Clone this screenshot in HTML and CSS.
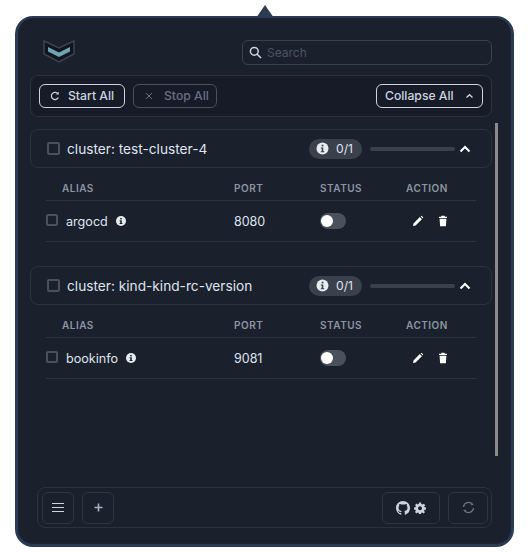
FILE: index.html
```html
<!DOCTYPE html>
<html lang="en">
<head>
<meta charset="utf-8">
<title>Port Forward</title>
<link rel="stylesheet" href="styles.css">
</head>
<body>
<div class="popup">
  <div class="arrow"></div>
  <div class="panel">
    <header class="top">
      <svg class="logo" width="34" height="26" viewBox="0 0 34 26">
        <path d="M2 3 L17 10 L32 3 L32 16 L17 24 L2 16 Z" fill="#10151f" stroke="#3c4350" stroke-width="1.5"/>
        <path d="M6 9 L17 14.5 L28 9 L28 13.5 L17 19 L6 13.5 Z" fill="#6fa3b0"/>
      </svg>
      <label class="search">
        <svg width="13" height="13" viewBox="0 0 13 13"><circle cx="5.3" cy="5.3" r="3.9" fill="none" stroke="#cbd5e0" stroke-width="1.5"/><path d="M8.2 8.2 L12 12" stroke="#cbd5e0" stroke-width="1.6"/></svg>
        <span>Search</span>
      </label>
    </header>
    <div class="toolbar">
      <button class="btn btn-on start"><svg width="10" height="10" viewBox="0 0 10 10"><path d="M8.3 6.4A3.6 3.6 0 1 1 7.6 2.4" fill="none" stroke="#cbd5e0" stroke-width="1.2"/><path d="M8.8 0.8V3.6H6Z" fill="#cbd5e0"/></svg>Start All</button>
      <button class="btn btn-off stop"><svg width="8" height="8" viewBox="0 0 8 8"><path d="M1 1L7 7M7 1L1 7" stroke="#687080" stroke-width="1"/></svg>Stop All</button>
      <button class="btn btn-on collapse">Collapse All<svg width="9" height="6" viewBox="0 0 9 6"><path d="M1.5 4.5L4.5 1.7L7.5 4.5" fill="none" stroke="#cbd5e0" stroke-width="1.3"/></svg></button>
    </div>
    <div class="scroll">
      <div class="list">
        <section class="group">
          <div class="group-head">
            <span class="check"></span>
            <span class="name">cluster: test-cluster-4</span>
            <span class="pill"><svg class="info" width="13" height="13" viewBox="0 0 13 13"><circle cx="6.5" cy="6.5" r="6" fill="#e8ebf0"/><rect x="5.7" y="2.7" width="1.7" height="1.7" fill="#3a404c"/><path d="M4.8 5.5H7.3V9.2H8.2V10.2H4.8V9.2H5.7V6.5H4.8Z" fill="#3a404c"/></svg>0/1</span>
            <span class="bar"></span>
            <svg class="chev" width="12" height="8" viewBox="0 0 12 8"><path d="M1.5 6.5L6 2L10.5 6.5" fill="none" stroke="#fff" stroke-width="2"/></svg>
          </div>
          <div class="row head-row">
            <span class="c-alias">ALIAS</span><span class="c-port">PORT</span><span class="c-status">STATUS</span><span class="c-action">ACTION</span>
          </div>
          <div class="row body-row">
            <span class="c-alias alias"><span class="check small"></span>argocd<svg class="info2" width="10" height="10" viewBox="0 0 13 13"><circle cx="6.5" cy="6.5" r="6.5" fill="#e8ebf0"/><rect x="5.5" y="2.5" width="2" height="2" fill="#1a202c"/><path d="M4.6 5.5H7.5V9.2H8.4V10.4H4.6V9.2H5.5V6.7H4.6Z" fill="#1a202c"/></svg></span>
            <span class="c-port port">8080</span>
            <span class="c-status"><span class="toggle"><span class="knob"></span></span></span>
            <span class="c-action actions">
              <svg width="12" height="12" viewBox="0 0 12 12"><path d="M1 11L1.5 8.4L7.8 2.1L9.9 4.2L3.6 10.5Z M8.6 1.3L9.5 0.7L11.3 2.5L10.7 3.4Z" fill="#fff"/></svg>
              <svg width="10" height="12" viewBox="0 0 10 12"><path d="M1 1.7H3L3.5 0.8H6.5L7 1.7H9V3H1Z M1.6 3.8H8.4L7.9 11.2H2.1Z" fill="#fff"/></svg>
            </span>
          </div>
        </section>
        <section class="group">
          <div class="group-head">
            <span class="check"></span>
            <span class="name">cluster: kind-kind-rc-version</span>
            <span class="pill"><svg class="info" width="13" height="13" viewBox="0 0 13 13"><circle cx="6.5" cy="6.5" r="6" fill="#e8ebf0"/><rect x="5.7" y="2.7" width="1.7" height="1.7" fill="#3a404c"/><path d="M4.8 5.5H7.3V9.2H8.2V10.2H4.8V9.2H5.7V6.5H4.8Z" fill="#3a404c"/></svg>0/1</span>
            <span class="bar"></span>
            <svg class="chev" width="12" height="8" viewBox="0 0 12 8"><path d="M1.5 6.5L6 2L10.5 6.5" fill="none" stroke="#fff" stroke-width="2"/></svg>
          </div>
          <div class="row head-row">
            <span class="c-alias">ALIAS</span><span class="c-port">PORT</span><span class="c-status">STATUS</span><span class="c-action">ACTION</span>
          </div>
          <div class="row body-row">
            <span class="c-alias alias"><span class="check small"></span>bookinfo<svg class="info2" width="10" height="10" viewBox="0 0 13 13"><circle cx="6.5" cy="6.5" r="6.5" fill="#e8ebf0"/><rect x="5.5" y="2.5" width="2" height="2" fill="#1a202c"/><path d="M4.6 5.5H7.5V9.2H8.4V10.4H4.6V9.2H5.5V6.7H4.6Z" fill="#1a202c"/></svg></span>
            <span class="c-port port">9081</span>
            <span class="c-status"><span class="toggle"><span class="knob"></span></span></span>
            <span class="c-action actions">
              <svg width="12" height="12" viewBox="0 0 12 12"><path d="M1 11L1.5 8.4L7.8 2.1L9.9 4.2L3.6 10.5Z M8.6 1.3L9.5 0.7L11.3 2.5L10.7 3.4Z" fill="#fff"/></svg>
              <svg width="10" height="12" viewBox="0 0 10 12"><path d="M1 1.7H3L3.5 0.8H6.5L7 1.7H9V3H1Z M1.6 3.8H8.4L7.9 11.2H2.1Z" fill="#fff"/></svg>
            </span>
          </div>
        </section>
      </div>
      <div class="thumb"></div>
    </div>
    <footer class="bottom">
      <button class="fbtn square"><svg width="14" height="11" viewBox="0 0 14 11"><path d="M1 1.5H13M1 5.5H13M1 9.5H13" stroke="#cbd5e0" stroke-width="1"/></svg></button>
      <button class="fbtn square"><svg width="9" height="9" viewBox="0 0 9 9"><path d="M4.5 0.5V8.5M0.5 4.5H8.5" stroke="#a9b1bf" stroke-width="1.6"/></svg></button>
      <span class="spacer"></span>
      <button class="fbtn wide">
        <svg width="14" height="14" viewBox="0 0 16 16"><path fill="#cbd5e0" d="M8 0C3.58 0 0 3.58 0 8c0 3.54 2.29 6.53 5.47 7.59.4.07.55-.17.55-.38 0-.19-.01-.82-.01-1.49-2.01.37-2.53-.49-2.69-.94-.09-.23-.48-.94-.82-1.13-.28-.15-.68-.52-.01-.53.63-.01 1.08.58 1.23.82.72 1.21 1.87.87 2.33.66.07-.52.28-.87.51-1.07-1.78-.2-3.64-.89-3.64-3.95 0-.87.31-1.59.82-2.15-.08-.2-.36-1.02.08-2.12 0 0 .67-.21 2.2.82.64-.18 1.32-.27 2-.27s1.36.09 2 .27c1.53-1.04 2.2-.82 2.2-.82.44 1.1.16 1.92.08 2.12.51.56.82 1.27.82 2.15 0 3.07-1.87 3.75-3.65 3.95.29.25.54.73.54 1.48 0 1.07-.01 1.93-.01 2.2 0 .21.15.46.55.38A8 8 0 0 0 16 8c0-4.42-3.58-8-8-8z"/></svg>
        <svg width="12" height="12" viewBox="0 0 12 12"><path fill="#cbd5e0" fill-rule="evenodd" d="M5 0.5H7L7.3 2L8.6 2.6L9.9 1.8L11.2 3.3L10.2 4.4L10.7 5.3L12 5.6V7.4L10.6 7.8L10.1 9L10.9 10.2L9.5 11.5L8.3 10.6L7.2 11L7 12H5L4.7 10.9L3.6 10.5L2.4 11.4L1 10L1.9 8.8L1.4 7.7L0 7.4V5.5L1.4 5.2L1.9 4.1L1.1 3L2.5 1.6L3.7 2.4L4.7 2Z M6 4.2A2 2 0 1 0 6 8.2A2 2 0 1 0 6 4.2Z"/></svg>
      </button>
      <button class="fbtn refresh"><svg width="13" height="13" viewBox="0 0 13 13"><path d="M1.5 6A5 5 0 0 1 10.4 3.4M11.5 7A5 5 0 0 1 2.6 9.6" fill="none" stroke="#6d7481" stroke-width="1.3"/><path d="M12 3.6L9 4.6L9.4 2Z M1 9.4L4 8.4L3.6 11Z" fill="#6d7481"/></svg></button>
    </footer>
  </div>
</div>
</body>
</html>
```

FILE: styles.css
```css
* { box-sizing: border-box; }
html, body { margin: 0; padding: 0; background: #fff; }
body { width: 528px; height: 553px; overflow: hidden; font-family: Inter, "Liberation Sans", sans-serif; color: #e2e8f0; }
.popup { position: relative; padding: 16px 14px 6px 15px; height: 553px; }
.arrow { position: absolute; left: 256px; top: 5px; width: 0; height: 0; border-left: 9px solid transparent; border-right: 9px solid transparent; border-bottom: 13px solid #2d3a50; }
.panel { position: relative; width: 499px; height: 531px; background: #1a202c; border: 3px solid #2a3a52; border-top-width: 2px; border-radius: 18px; padding: 21px 19px 16px 12px; display: flex; flex-direction: column; box-shadow: inset 0 0 0 1px #1c2331; }
.top { display: flex; justify-content: space-between; align-items: center; height: 26px; padding-left: 12px; }
.logo { display: block; margin-top: -2px; }
.search { width: 250px; height: 25px; border: 1px solid #3a4150; border-radius: 6px; display: flex; align-items: center; gap: 5px; padding-left: 6px; font-size: 12px; color: #4d5462; }
.toolbar { margin-top: 10px; height: 42px; background: #171b27; border: 1px solid #2b3240; border-radius: 8px; display: flex; align-items: center; padding: 0 8px; gap: 8px; }
.btn { height: 24px; border-radius: 6px; background: transparent; font: 500 12.2px Inter, "Liberation Sans", sans-serif; display: flex; align-items: center; padding: 0 0 1px; }
.btn-on { border: 1px solid #cbd5e0; color: #cbd5e0; }
.btn-off { border: 1px solid #4a505c; color: #687080; }
.start { width: 86px; gap: 8px; padding-left: 10px; }
.stop { width: 84px; gap: 11px; padding-left: 11px; }
.collapse { width: 107px; margin-left: auto; gap: 11px; padding-left: 8px; }
.scroll { position: relative; margin-top: 6px; flex: 1; min-height: 0; }
.list { display: flex; flex-direction: column; gap: 24px; padding-top: 6px; }
.group-head { height: 39px; border: 1px solid #2b3240; border-radius: 8px; display: flex; align-items: center; padding: 0 20px 0 16px; font-size: 13.7px; color: #dfe4ec; }
.check { width: 13px; height: 13px; border: 2px solid #4a505c; border-radius: 2px; display: inline-block; flex: none; }
.name { margin-left: 7px; flex: 1; }
.pill { width: 53px; height: 20px; border-radius: 10px; background: #3a404c; display: flex; align-items: center; justify-content: flex-start; padding-left: 7px; gap: 7px; font-size: 12.2px; color: #dfe4ec; }
.info { flex: none; }
.bar { width: 85px; height: 4px; border-radius: 2px; background: #3a404c; margin: 0 4px 0 8px; }
.chev { margin-left: 0; flex: none; }
.row { display: flex; margin-left: 16px; width: 430px; border-bottom: 1px solid #2d3441; align-items: center; }
.head-row { height: 33px; font-size: 10px; font-weight: 600; letter-spacing: 0.5px; color: #8d95a3; padding-top: 8px; }
.body-row { height: 41px; font-size: 13px; color: #dfe4ec; }
.c-alias { width: 188px; padding-left: 16px; }
.c-port { width: 86px; }
.c-status { width: 86px; }
.c-action { width: 70px; }
.alias { display: flex; align-items: center; padding-left: 0; font-size: 12.6px; }
.check.small { width: 12px; height: 12px; margin-right: 8px; margin-top: -3px; }
.info2 { margin-left: 8px; }
.port { font-size: 12.5px; }
.toggle { display: block; width: 26px; height: 16px; border-radius: 8px; background: #4a505c; position: relative; }
.knob { position: absolute; left: 1px; top: 2px; width: 12px; height: 12px; border-radius: 50%; background: #fff; }
.actions { display: flex; align-items: center; gap: 14px; padding-left: 6px; }
.thumb { position: absolute; left: 465px; top: 0; width: 3px; height: 333px; background: #8a8a8a; }
.bottom { height: 41px; flex: none; margin-top: auto; border: 1px solid #2b3240; border-radius: 8px; margin-left: 7px; display: flex; align-items: center; padding: 0 3px 0 4px; gap: 8px; }
.fbtn { height: 32px; background: transparent; border: 1px solid #2e3543; border-radius: 6px; display: flex; align-items: center; justify-content: center; padding: 0; }
.square { width: 32px; }
.wide { width: 58px; gap: 4px; }
.refresh { width: 40px; }
.spacer { flex: 1; }
```
